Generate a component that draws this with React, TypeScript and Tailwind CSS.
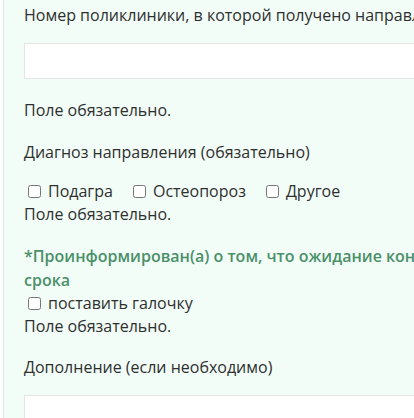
import React from 'react';

const Required = () => <p className="leading-[23px]">Поле обязательно.</p>;

const Check = ({ label }: { label: string }) => (
  <label className="inline-flex items-center mr-[16px]">
    <input type="checkbox" className="ml-[4px] mr-[7px] w-[13px] h-[13px]" />
    <span>{label}</span>
  </label>
);

export default function App() {
  return (
    <div className="w-[414px] h-[418px] overflow-hidden bg-white">
      <div
        className="ml-[3px] w-[760px] h-full border-l border-[#dcebe3] bg-[#f2fdf8] pl-[20px] text-[16px] text-[#2f2f2f]"
        style={{ fontFamily: '"Open Sans", "Liberation Sans", sans-serif' }}
      >
        <p className="pt-[4px] leading-[23px] whitespace-nowrap">
          Номер поликлиники, в которой получено направление (обязательно)
        </p>
        <input type="text" className="mt-[16px] block w-[700px] h-[36px] bg-white border border-[#e3e6e4]" />
        <div className="mt-[20px]">
          <Required />
        </div>
        <p className="mt-[19px] leading-[23px]">Диагноз направления (обязательно)</p>
        <div className="mt-[16px] leading-[23px] flex">
          <Check label="Подагра" />
          <Check label="Остеопороз" />
          <Check label="Другое" />
        </div>
        <Required />
        <p className="mt-[18px] leading-[24px] font-semibold text-[#4b9069]">
          <span className="block whitespace-nowrap">
            *Проинформирован(а) о том, что ожидание консультации может превысить установленные
          </span>
          <span className="block">срока</span>
        </p>
        <div className="leading-[23px] flex">
          <Check label="поставить галочку" />
        </div>
        <Required />
        <p className="mt-[18px] leading-[23px]">Дополнение (если необходимо)</p>
        <input type="text" className="mt-[16px] block w-[700px] h-[36px] bg-white border border-[#e3e6e4]" />
      </div>
    </div>
  );
}
